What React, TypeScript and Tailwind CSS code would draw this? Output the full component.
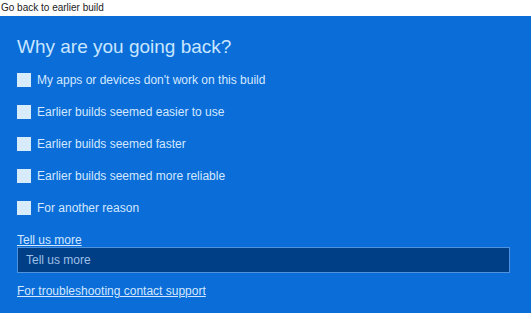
import React from 'react'

const reasons = [
  "My apps or devices don't work on this build",
  'Earlier builds seemed easier to use',
  'Earlier builds seemed faster',
  'Earlier builds seemed more reliable',
  'For another reason',
]

export default function App() {
  return (
    <div className="w-[531px] h-[313px] flex flex-col overflow-hidden" style={{ fontFamily: '"Liberation Sans", Arial, sans-serif' }}>
      {/* title bar */}
      <div className="h-[16px] bg-white text-[10px] leading-[16px] text-[#222] pl-[1px]">
        Go back to earlier build
      </div>

      <div className="flex-1 bg-[#0a6dd8] px-[17px] pt-[18px] text-[#d4e8ff]">
        <h1 className="text-[19px] leading-[26px] text-[#c8e6ff]">Why are you going back?</h1>

        <div className="mt-[13px] flex flex-col gap-[18px]">
          {reasons.map((r) => (
            <label key={r} className="flex items-center gap-[6px] h-[14px]">
              <span className="w-[14px] h-[14px] bg-[#d8ebfb] shrink-0" />
              <span className="text-[12px] leading-[14px]">{r}</span>
            </label>
          ))}
        </div>

        <div className="mt-[19px] text-[12px] leading-[13px] underline decoration-[#d4e8ff]">Tell us more</div>
        <div className="h-[26px] w-[493px] bg-[#003f86] border border-[#4f93df] flex items-center px-[8px] text-[12px] text-[#9fc0e6]">
          Tell us more
        </div>

        <div className="mt-[11px] text-[12px] leading-[14px] underline">For troubleshooting contact support</div>
      </div>
    </div>
  )
}
